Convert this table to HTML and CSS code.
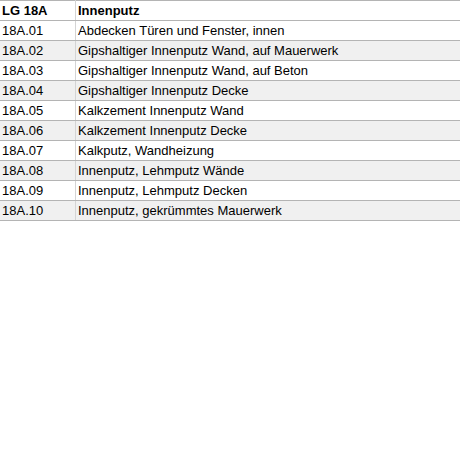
FILE: index.html
```html
<!DOCTYPE html>
<html>
<head>
<meta charset="utf-8">
<link rel="stylesheet" href="styles.css">
</head>
<body>
<table class="lg">
  <thead>
    <tr><th class="code">LG 18A</th><th>Innenputz</th></tr>
  </thead>
  <tbody>
    <tr><td class="code">18A.01</td><td>Abdecken Türen und Fenster, innen</td></tr>
    <tr><td class="code">18A.02</td><td>Gipshaltiger Innenputz Wand, auf Mauerwerk</td></tr>
    <tr><td class="code">18A.03</td><td>Gipshaltiger Innenputz Wand, auf Beton</td></tr>
    <tr><td class="code">18A.04</td><td>Gipshaltiger Innenputz Decke</td></tr>
    <tr><td class="code">18A.05</td><td>Kalkzement Innenputz Wand</td></tr>
    <tr><td class="code">18A.06</td><td>Kalkzement Innenputz Decke</td></tr>
    <tr><td class="code">18A.07</td><td>Kalkputz, Wandheizung</td></tr>
    <tr><td class="code">18A.08</td><td>Innenputz, Lehmputz Wände</td></tr>
    <tr><td class="code">18A.09</td><td>Innenputz, Lehmputz Decken</td></tr>
    <tr><td class="code">18A.10</td><td>Innenputz, gekrümmtes Mauerwerk</td></tr>
  </tbody>
</table>
</body>
</html>
```
FILE: styles.css
```css
html, body {
  margin: 0;
  padding: 0;
  background: #ffffff;
}
.lg {
  width: 100%;
  border-collapse: collapse;
  font-family: "Liberation Sans", Arial, sans-serif;
  font-size: 13px;
  color: #000;
}
.lg th, .lg td {
  height: 19px;
  padding: 0 0 0 2px;
  text-align: left;
  vertical-align: middle;
  border-top: 1px solid #b4b4b4;
  border-bottom: 1px solid #b4b4b4;
  line-height: 15px;
  white-space: nowrap;
}
.lg th {
  font-weight: bold;
}
.lg .code {
  width: 73px;
  padding-left: 2px;
  border-right: 1px solid #d4d4d4;
}
.lg tbody tr:nth-child(even) td {
  background: #f0f0f0;
}
```
